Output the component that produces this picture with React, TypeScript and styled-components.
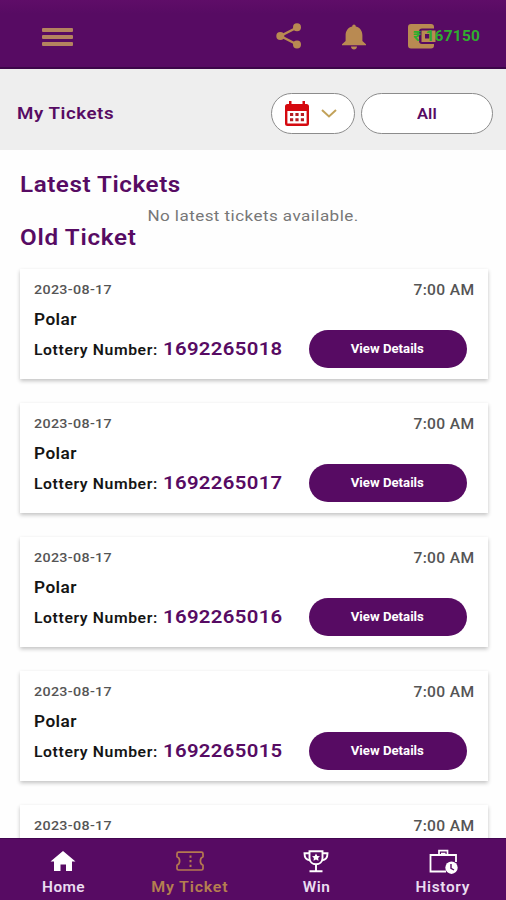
import React from "react";
import styled, { createGlobalStyle } from "styled-components";

const purple = "#570b63";
const gold = "#b98a52";

const GlobalStyle = createGlobalStyle`
  * { box-sizing: border-box; }
  body { margin: 0; background: #fff; font-family: Roboto, "Liberation Sans", sans-serif; }
`;

const Screen = styled.div`
  width: 506px;
  height: 900px;
  display: flex;
  flex-direction: column;
  overflow: hidden;
  background: #fefefe;
`;

const Text = styled.span<{
  $size: number;
  $weight?: number;
  $color?: string;
  $stretch?: number;
  $spacing?: number;
  $origin?: string;
}>`
  display: inline-block;
  white-space: nowrap;
  line-height: 1;
  font-size: ${(p) => p.$size}px;
  font-weight: ${(p) => p.$weight ?? 600};
  color: ${(p) => p.$color ?? purple};
  letter-spacing: ${(p) => p.$spacing ?? 0.4}px;
  transform: scaleX(${(p) => p.$stretch ?? 1.1});
  transform-origin: ${(p) => p.$origin ?? "left"} center;
`;

const TopBar = styled.header`
  flex: none;
  height: 69px;
  padding: 4px 26px 0 42px;
  display: flex;
  align-items: center;
  background: linear-gradient(#5f0d68 0, ${purple} 14px);
  border-bottom: 2px solid #3c0649;
`;

const MenuButton = styled.div`
  width: 31px;
  height: 18px;
  margin: 2px auto 0 0;
  display: flex;
  flex-direction: column;
  justify-content: space-between;
`;

const MenuLine = styled.span`
  height: 4px;
  border-radius: 1px;
  background: #b4835f;
`;

const ShareBox = styled.div`
  width: 25px;
  height: 26px;
  margin-right: 41px;
`;

const BellBox = styled.div`
  width: 24px;
  height: 26px;
  margin: 3px 42px 0 0;
`;

const Wallet = styled.div`
  position: relative;
  width: 72px;
  height: 25px;
  margin-top: 1px;
`;

const Balance = styled.div`
  position: absolute;
  left: 5px;
  top: 2px;
`;

const FilterBar = styled.section`
  flex: none;
  height: 81px;
  padding: 7px 13px 0 17px;
  display: flex;
  align-items: center;
  background: #eee;
`;

const Grow = styled.div`
  flex: 1;
`;

const Pill = styled.div<{ $width: number }>`
  width: ${(p) => p.$width}px;
  height: 41px;
  display: flex;
  align-items: center;
  justify-content: center;
  gap: 12px;
  margin-left: 6px;
  border: 1px solid #8c8c8c;
  border-radius: 21px;
  background: #fff;
`;

const DatePill = styled(Pill)`
  padding-right: 4px;
`;

const PillLabel = styled.div`
  display: flex;
  padding-top: 3px;
`;

const Content = styled.main`
  flex: 1;
  min-height: 0;
  overflow: hidden;
  padding: 23px 18px 0 20px;
`;

const Line = styled.div<{ $height: number; $top?: number }>`
  display: flex;
  align-items: center;
  height: ${(p) => p.$height}px;
  margin-top: ${(p) => p.$top ?? 0}px;
`;

const EmptyNote = styled.p`
  display: flex;
  align-items: center;
  justify-content: center;
  height: 33px;
  margin: 0;
  padding: 6px 2px 0 0;
`;

const List = styled.div`
  display: flex;
  flex-direction: column;
  gap: 24px;
  margin-top: 23px;
`;

const Card = styled.article`
  flex: none;
  height: 110px;
  padding: 12px 14px 0;
  background: #fff;
  box-shadow: 0 2px 4px rgba(0, 0, 0, 0.24);
`;

const CardTop = styled.div`
  display: flex;
  align-items: center;
  justify-content: space-between;
  height: 17px;
`;

const TimeSlot = styled.div`
  display: flex;
  padding-top: 1px;
`;

const CardBottom = styled.div`
  display: flex;
  align-items: center;
  height: 38px;
`;

const LabelSlot = styled.div`
  display: flex;
  width: 129px;
  padding-top: 2px;
`;

const NumberSlot = styled.div`
  display: flex;
  width: 146px;
`;

const DetailsButton = styled.div`
  width: 158px;
  height: 38px;
  display: flex;
  align-items: center;
  justify-content: center;
  padding-right: 1px;
  border-radius: 19px;
  background: ${purple};
`;

const BottomNav = styled.nav`
  flex: none;
  height: 62px;
  display: grid;
  grid-template-columns: repeat(4, 1fr);
  background: ${purple};
  border-top: 1px solid #420650;
`;

const NavItem = styled.div`
  display: flex;
  flex-direction: column;
  align-items: center;
  padding-top: 9px;
  gap: 6px;
`;

const NavIcon = styled.svg`
  width: 30px;
  height: 26px;
  display: block;
`;

const ShareIcon = () => (
  <svg width="25" height="26" viewBox="0 0 25 26">
    <path d="M21 4.5 4.5 13 21 21.5" fill="none" stroke={gold} strokeWidth="2.4" />
    <circle cx="21" cy="4.3" r="4" fill={gold} />
    <circle cx="4.3" cy="13" r="4" fill={gold} />
    <circle cx="21" cy="21.4" r="4" fill={gold} />
  </svg>
);

const BellIcon = () => (
  <svg width="24" height="26" viewBox="0 0 24 26">
    <path
      d="M10.2 2.4C10.2-.3 13.8-.3 13.8 2.4 18.6 3.6 20.4 7.4 20.4 11.5V17L24 20.2V21.2H0V20.2L3.6 17V11.5C3.6 7.4 5.4 3.6 10.2 2.4ZM9 22.6H15C15 26.6 9 26.6 9 22.6Z"
      fill={gold}
    />
  </svg>
);

const WalletIcon = () => (
  <svg width="28" height="25" viewBox="0 0 28 25">
    <path
      d="M3 0H23Q26 0 26 3V4.5H14Q11 4.5 11 7.5V17Q11 20 14 20H26V21.5Q26 24.5 23 24.5H3Q0 24.5 0 21.5V3Q0 0 3 0Z"
      fill={gold}
    />
    <path
      fillRule="evenodd"
      d="M13.5 6.5H27.5V18H13.5ZM17 10V14.5H21.5V10Z"
      fill={gold}
    />
  </svg>
);

const CalendarIcon = () => (
  <svg width="24" height="25" viewBox="0 0 24 25">
    <path
      fillRule="evenodd"
      d="M4 0H6.5V3H17.5V0H20V3H21.5Q24 3 24 5.5V22.5Q24 25 21.5 25H2.5Q0 25 0 22.5V5.5Q0 3 2.5 3H4ZM2.4 10V22.4H21.6V10Z"
      fill="#d5090f"
    />
    <path
      d="M5 13.4H19M5 18.8H19"
      stroke="#b51d22"
      strokeWidth="3"
      strokeDasharray="3.2 2.2"
    />
  </svg>
);

const HomeIcon = () => (
  <NavIcon viewBox="0 0 30 26">
    <path d="M15 3 27.5 13.5H24V23H18V16.5H12.5V23H6V13.5H2.5Z" fill="#fff" />
  </NavIcon>
);

const TicketIcon = () => (
  <NavIcon viewBox="0 0 30 26">
    <path
      d="M3.5 4.2H26.5Q28 4.2 28 5.7V8.7C24.5 10 24.5 16 28 17.3V20.5Q28 22 26.5 22H3.5Q2 22 2 20.5V17.3C5.5 16 5.5 10 2 8.7V5.7Q2 4.2 3.5 4.2Z"
      fill="none"
      stroke="#b57950"
      strokeWidth="1.7"
    />
    <path d="M15.5 7.5V19.5" stroke="#b57950" strokeWidth="2" strokeDasharray="2.2 2.4" />
  </NavIcon>
);

const TrophyIcon = () => (
  <NavIcon viewBox="0 0 30 26">
    <g fill="none" stroke="#fff" strokeWidth="1.9">
      <path d="M8.5 3.3H21.5V10C21.5 14 18.5 16.3 15 16.3S8.5 14 8.5 10Z" />
      <path d="M8.5 5.2H3.5C3.5 9.5 5.5 12 9 12.2M21.5 5.2H26.5C26.5 9.5 24.5 12 21 12.2" />
      <path d="M15 16V23M8.5 23.3H21.5" />
    </g>
    <path d="m15 5.5 1.3 2.4 2.7.3-1.9 1.9.4 2.7-2.5-1.3-2.5 1.3.4-2.7-1.9-1.9 2.7-.3Z" fill="#fff" />
  </NavIcon>
);

const HistoryIcon = () => (
  <NavIcon viewBox="0 0 30 26">
    <path d="M18 23.5H2.5V7H28V14" fill="none" stroke="#fff" strokeWidth="1.8" />
    <path d="M11 7V2.7H19.5V7M13 5.5H17.5" fill="none" stroke="#fff" strokeWidth="1.7" />
    <circle cx="23.5" cy="19.7" r="6.2" fill="#fff" />
    <path d="M23 16V20.3L26 22" fill="none" stroke={purple} strokeWidth="1.4" />
  </NavIcon>
);

const tickets = [
  "1692265018",
  "1692265017",
  "1692265016",
  "1692265015",
  "1692265014",
];

const TicketCard = ({ number }: { number: string }) => (
  <Card>
    <CardTop>
      <Text $size={13} $weight={500} $color="#555" $spacing={0.3}>2023-08-17</Text>
      <TimeSlot>
        <Text $size={14.2} $weight={500} $color="#555" $spacing={0.3} $origin="right">7:00 AM</Text>
      </TimeSlot>
    </CardTop>
    <Line $height={20} $top={12}>
      <Text $size={15.7} $color="#151515">Polar</Text>
    </Line>
    <CardBottom>
      <LabelSlot>
        <Text $size={14.3} $color="#151515" $spacing={0.55}>Lottery Number:</Text>
      </LabelSlot>
      <NumberSlot>
        <Text $size={18.5} $spacing={0.3}>{number}</Text>
      </NumberSlot>
      <DetailsButton>
        <Text $size={12} $weight={700} $color="#fff" $origin="center" $spacing={0}>View Details</Text>
      </DetailsButton>
    </CardBottom>
  </Card>
);

export default function App() {
  return (
    <Screen>
      <GlobalStyle />
      <TopBar>
        <MenuButton>
          <MenuLine />
          <MenuLine />
          <MenuLine />
        </MenuButton>
        <ShareBox><ShareIcon /></ShareBox>
        <BellBox><BellIcon /></BellBox>
        <Wallet>
          <WalletIcon />
          <Balance>
            <Text $size={14} $weight={700} $color="#2fae2f" $spacing={0.25}>₹ 167150</Text>
          </Balance>
        </Wallet>
      </TopBar>
      <FilterBar>
        <Text $size={17} $spacing={0.5}>My Tickets</Text>
        <Grow />
        <DatePill $width={84}>
          <CalendarIcon />
          <svg width="16" height="9" viewBox="0 0 16 9">
            <path d="M1 1 8 7.5 15 1" fill="none" stroke="#c2a25a" strokeWidth="2" />
          </svg>
        </DatePill>
        <Pill $width={132}>
          <PillLabel>
            <Text $size={15} $origin="center" $spacing={0}>All</Text>
          </PillLabel>
        </Pill>
      </FilterBar>
      <Content>
        <Line $height={24}><Text $size={22} $spacing={0.5}>Latest Tickets</Text></Line>
        <EmptyNote>
          <Text $size={15.5} $weight={400} $color="#777" $origin="center">No latest tickets available.</Text>
        </EmptyNote>
        <Line $height={16}><Text $size={22} $spacing={0.65}>Old Ticket</Text></Line>
        <List>
          {tickets.map((n) => <TicketCard key={n} number={n} />)}
        </List>
      </Content>
      <BottomNav>
        <NavItem>
          <HomeIcon />
          <Text $size={14} $color="#eadcf0" $origin="center">Home</Text>
        </NavItem>
        <NavItem>
          <TicketIcon />
          <Text $size={14} $color="#b57f50" $origin="center" $spacing={0.7} $stretch={1.14}>My Ticket</Text>
        </NavItem>
        <NavItem>
          <TrophyIcon />
          <Text $size={14} $color="#eadcf0" $origin="center">Win</Text>
        </NavItem>
        <NavItem>
          <HistoryIcon />
          <Text $size={14} $color="#eadcf0" $origin="center" $spacing={0.6}>History</Text>
        </NavItem>
      </BottomNav>
    </Screen>
  );
}
